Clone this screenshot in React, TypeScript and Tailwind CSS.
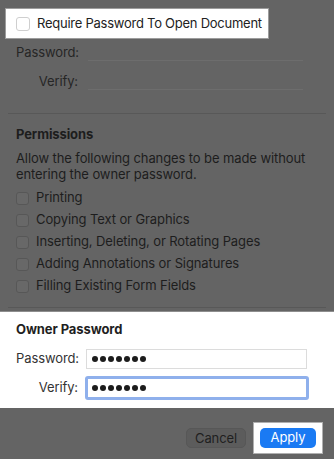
import React from 'react';

const font = { fontFamily: 'Inter, "Liberation Sans", sans-serif' };

function DimBox() {
  return <span className="w-[13px] h-[13px] rounded-[3px] border border-[#575757] bg-[#686868] shrink-0" />;
}

const permissions = [
  'Printing',
  'Copying Text or Graphics',
  'Inserting, Deleting, or Rotating Pages',
  'Adding Annotations or Signatures',
  'Filling Existing Form Fields',
];

function Dots() {
  return (
    <span className="flex gap-[2px]">
      {[0, 1, 2, 3, 4, 5, 6].map(i => (
        <span key={i} className="w-[6px] h-[6px] rounded-full bg-[#1c1c1c]" />
      ))}
    </span>
  );
}

export default function App() {
  return (
    <div
      className="w-[334px] h-[459px] bg-[#646464] text-[13px] tracking-[-0.1px] text-[#1d1d1d] overflow-hidden flex flex-col"
      style={font}
    >
      <div className="mt-[8px] ml-[5px] w-[264px] h-[31px] bg-white border border-[#9c9c9c] flex items-center pl-[10px] gap-[7px]">
        <span className="w-[14px] h-[14px] rounded-[3px] border border-[#cfcfcf] bg-white shrink-0" />
        <span className="text-[#222] whitespace-nowrap tracking-[-0.25px]">Require Password To Open Document</span>
      </div>

      <div className="grid grid-cols-[62px_1fr] gap-x-[10px] pl-[16px] pr-[31px] mt-[2px]">
        <span className="text-right leading-[16px] pt-[3px] text-[#262626]">Password:</span>
        <span className="border-b border-[#6d6d6d] h-[20px]" />
        <span className="text-right leading-[16px] pt-[12px] text-[#262626]">Verify:</span>
        <span className="border-b border-[#6d6d6d] h-[29px]" />
      </div>

      <div className="mx-[8px] mt-[23px] border-t border-[#585858]" />

      <div className="pl-[16px] pt-[12px]">
        <div className="font-bold leading-[16px]">Permissions</div>
        <div className="mt-[8px] leading-[16px] pr-[10px]">
          Allow the following changes to be made without entering the owner password.
        </div>
        <div className="mt-[5px] flex flex-col">
          {permissions.map(p => (
            <div key={p} className="h-[22px] flex items-center gap-[7px]">
              <DimBox />
              <span>{p}</span>
            </div>
          ))}
        </div>
      </div>

      <div className="mx-[8px] mt-[10px] border-t border-[#585858]" />

      <div className="mt-[3px] h-[97px] bg-white border-t border-[#8e8e8e] pl-[16px] pt-[9px]">
        <div className="font-bold leading-[16px] text-[#1f1f1f]">Owner Password</div>
        <div className="grid grid-cols-[62px_1fr] gap-x-[8px] items-center mt-[12px] pr-[27px]">
          <span className="text-right text-[#333]">Password:</span>
          <div className="h-[20px] border border-[#dcdcdc] flex items-center pl-[5px] bg-white">
            <Dots />
          </div>
          <span className="text-right text-[#333] mt-[7px]">Verify:</span>
          <div className="mt-[7px] h-[24px] -ml-[1px] -mr-[2px] rounded-[3px] border-[3px] border-[#8fb0ec] flex items-center pl-[4px] bg-white">
            <Dots />
          </div>
        </div>
      </div>

      <div className="flex justify-end items-center pr-[11px] mt-[14px] gap-[7px]">
        <button className="w-[60px] h-[20px] rounded-[5px] bg-[#5c5c5c] border border-[#575757] text-[#1f1f1f] text-[13px]">
          Cancel
        </button>
        <div className="w-[70px] h-[32px] bg-white border border-[#b0b0b0] flex items-center justify-center">
          <button className="w-[56px] h-[20px] rounded-[5px] bg-[#1a7af3] text-white text-[13px]">Apply</button>
        </div>
      </div>
    </div>
  );
}
